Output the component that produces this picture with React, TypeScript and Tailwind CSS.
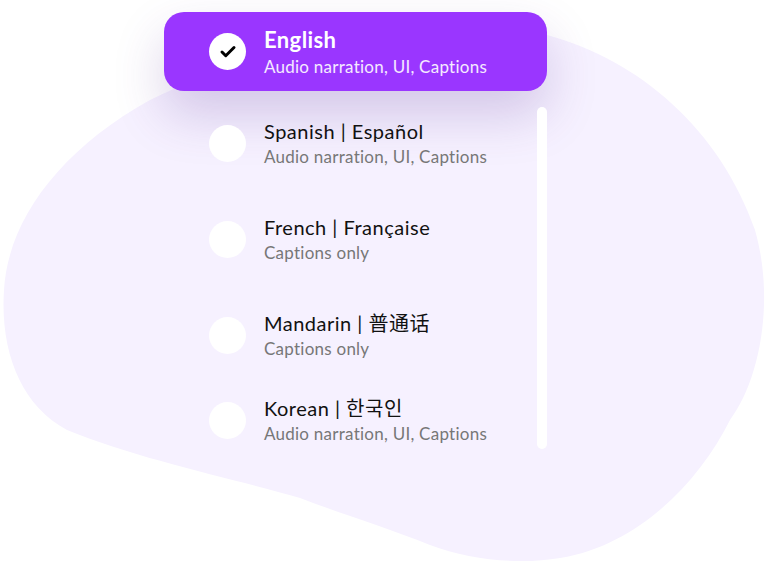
import { Check } from "lucide-react";

const LANGS = [
  { name: "Spanish | Español", note: "Audio narration, UI, Captions", gap: "mt-[10px]" },
  { name: "French | Française", note: "Captions only", gap: "mt-[44px]" },
  { name: "Mandarin | 普通话", note: "Captions only", gap: "mt-[44px]" },
  { name: "Korean | 한국인", note: "Audio narration, UI, Captions", gap: "mt-[33px]" },
];

const font = "font-['Lato','Noto_Sans_CJK_SC','Noto_Sans_CJK_KR',sans-serif]";

export default function App() {
  return (
    <div className={`relative w-[768px] h-[563px] overflow-hidden bg-white ${font}`}>
      {/* background blob */}
      <svg className="absolute inset-0" width="768" height="563" viewBox="0 0 768 563">
        <path
          d="M547 35 C640 60 720 130 755 230 C775 300 760 380 730 420 C700 480 640 545 560 558 C520 565 470 560 430 545 C380 525 330 510 300 498 C240 480 140 460 67 430 C20 405 0 350 4 290 C8 220 60 150 150 100 C250 50 420 20 547 35 Z"
          fill="#f6f1ff"
        />
      </svg>

      <div className="relative pl-[164px] pt-[12px]">
        <div className="w-[383px]">
          {/* selected language */}
          <div className="flex h-[79px] items-center gap-[18px] rounded-[20px] bg-[#9a36ff] pl-[45px] shadow-[0_24px_50px_rgba(90,50,150,0.22)]">
            <div className="flex h-[37px] w-[37px] items-center justify-center rounded-full bg-white">
              <Check size={18} strokeWidth={4} className="text-black" />
            </div>
            <div className="flex flex-col">
              <span className="text-[22px] font-bold leading-[30px] tracking-[0.4px] text-white">English</span>
              <span className="text-[17px] leading-[23px] tracking-[0.25px] text-white/90">Audio narration, UI, Captions</span>
            </div>
          </div>

          {/* other languages */}
          <div className="mt-[16px] flex">
            <div className="flex flex-1 flex-col">
              {LANGS.map((l) => (
                <div key={l.name} className={`flex h-[52px] items-center gap-[18px] pl-[45px] ${l.gap}`}>
                  <div className="h-[37px] w-[37px] shrink-0 rounded-full bg-white" />
                  <div className="flex flex-col">
                    <span className="text-[20px] leading-[28px] tracking-[0.5px] text-[#111]">{l.name}</span>
                    <span className="text-[17px] leading-[24px] tracking-[0.25px] text-[#777]">{l.note}</span>
                  </div>
                </div>
              ))}
            </div>
            <div className="h-[342px] w-[10px] rounded-full bg-white" />
          </div>
        </div>
      </div>
    </div>
  );
}
